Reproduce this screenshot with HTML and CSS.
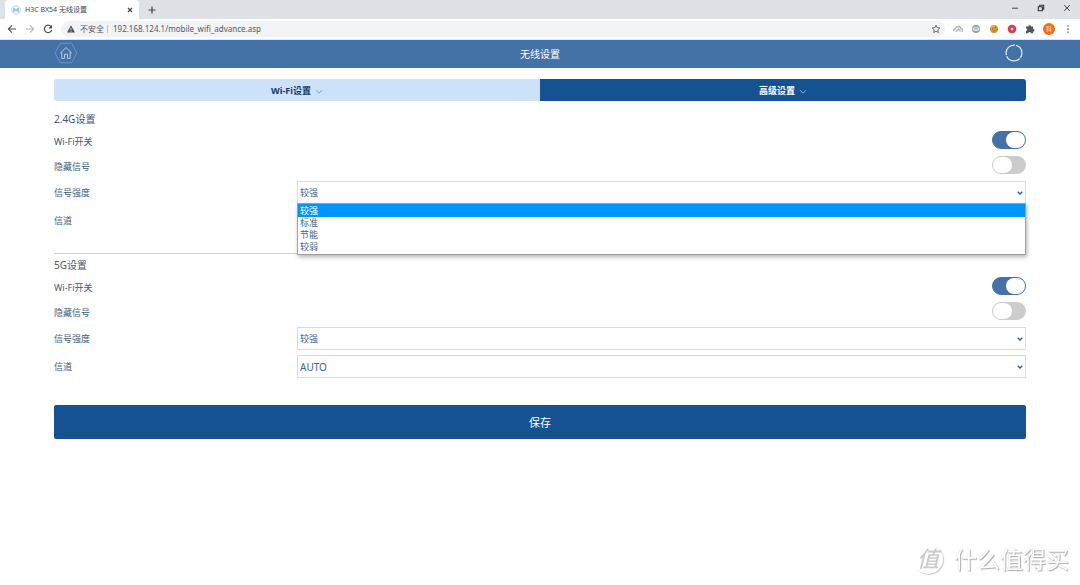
FILE: index.html
```html
<!DOCTYPE html>
<html lang="zh-CN">
<head>
<meta charset="utf-8">
<meta name="viewport" content="width=device-width, initial-scale=1">
<title>H3C BX54 无线设置</title>
<link rel="stylesheet" href="styles.css">
</head>
<body>
<div class="browser">
  <div class="tabstrip">
    <div class="browser-tab">
      <svg class="favicon" viewBox="0 0 10 10"><circle cx="5" cy="5" r="4.2" fill="#edf6fe" stroke="#9bc9ee" stroke-width=".6"/><path d="M2.9 7V3.4L5 5.9l2.1-2.5V7" fill="none" stroke="#3d98df" stroke-width=".8"/></svg>
      <span class="browser-title">H3C BX54 无线设置</span>
      <button class="icon-button" aria-label="关闭标签页"><svg width="6" height="6" viewBox="0 0 6 6"><path d="M1 1l4 4M5 1L1 5" stroke="#444" stroke-width="1.1"/></svg></button>
    </div>
    <button class="icon-button new-tab" aria-label="新标签页"><svg width="8" height="8" viewBox="0 0 8 8"><path d="M4 .5v7M.5 4h7" stroke="#444" stroke-width="1.2"/></svg></button>
    <div class="window-controls">
      <button class="icon-button" aria-label="最小化"><svg width="8" height="8" viewBox="0 0 8 8"><path d="M1 4.2h6" stroke="#444"/></svg></button>
      <button class="icon-button" aria-label="还原"><svg width="8" height="8" viewBox="0 0 8 8"><path d="M1.3 2.7h4v4h-4zM2.7 2.5V1.2h4v4H5.5" fill="none" stroke="#333" stroke-width="1.1"/></svg></button>
      <button class="icon-button" aria-label="关闭"><svg width="8" height="8" viewBox="0 0 8 8"><path d="M1.2 1.2l5.6 5.6M6.8 1.2L1.2 6.8" stroke="#444"/></svg></button>
    </div>
  </div>
  <div class="toolbar">
    <button class="icon-button" aria-label="后退"><svg width="10" height="10" viewBox="0 0 10 10"><path d="M9 5H1.5M5 1.4L1.4 5 5 8.6" fill="none" stroke="#4d5155" stroke-width="1.1"/></svg></button>
    <button class="icon-button" aria-label="前进"><svg width="10" height="10" viewBox="0 0 10 10"><path d="M1 5h7.5M5 1.4L8.6 5 5 8.6" fill="none" stroke="#b5b7ba" stroke-width="1.1"/></svg></button>
    <button class="icon-button" aria-label="重新加载"><svg width="10" height="10" viewBox="0 0 10 10"><path d="M8 2.6A3.7 3.7 0 1 0 8.7 5.8" fill="none" stroke="#4d5155" stroke-width="1.2"/><path d="M9 .8v3.6H5.4z" fill="#4d5155"/></svg></button>
    <div class="omnibox">
      <svg width="8" height="8" viewBox="0 0 8 8"><path d="M4 .3L8 7.6H0z" fill="#505458"/><path d="M4 3v2.2M4 5.8v1" stroke="#f1f3f4" stroke-width=".8"/></svg>
      <span class="insecure">不安全</span>
      <input class="url" type="text" aria-label="地址" value="192.168.124.1/mobile_wifi_advance.asp">
      <button class="icon-button" aria-label="收藏"><svg width="10" height="10" viewBox="0 0 10 10"><path d="M5 1.1l1.1 2.6 2.8.2-2.1 1.9.6 2.8L5 7.1 2.6 8.6l.6-2.8L1.1 3.9l2.8-.2z" fill="none" stroke="#606469" stroke-width=".9"/></svg></button>
    </div>
    <div class="extensions">
      <button class="icon-button" aria-label="网盘"><svg width="10" height="10" viewBox="0 0 10 10"><path d="M1 7.2a1.6 1.6 0 0 1 1.3-2.5A3 3 0 0 1 8 4.5a1.8 1.8 0 0 1 .8 3.2M2.8 7.7L5.5 5l2 2.2" fill="none" stroke="#b0b2b3" stroke-width="1.4"/></svg></button>
      <button class="icon-button" aria-label="同步"><svg width="10" height="10" viewBox="0 0 10 10"><circle cx="5" cy="5" r="4" fill="#8fa1a6"/><ellipse cx="5" cy="5" rx="3.2" ry="1.9" fill="#e5eded"/><path d="M3.2 5.3q1.8-2 3.6 0" fill="none" stroke="#7c969e"/></svg></button>
      <button class="icon-button" aria-label="Cookie"><svg width="10" height="10" viewBox="0 0 10 10"><circle cx="5" cy="5" r="4" fill="#df9232"/><path d="M2 4q1-2.5 3.5-2" stroke="#f8c06a" fill="none"/><path d="M3 5h1M6 3.5h1M5.5 6.8h1M4 7.8h.6M7.5 5.5h.7" stroke="#96501b"/></svg></button>
      <button class="icon-button" aria-label="拦截"><svg width="10" height="10" viewBox="0 0 10 10"><circle cx="5" cy="5" r="4.3" fill="#e03843"/><path d="M5 3.6v2.8M3.6 5h2.8" stroke="#fff" stroke-width="1.1"/></svg></button>
      <button class="icon-button" aria-label="扩展程序"><svg width="10" height="10" viewBox="0 0 10 10"><path d="M1 2.6h2.3a1.4 1.4 0 0 1 2.8 0h2v2.3a1.4 1.4 0 0 1 0 2.8V9.2H5.9a1.3 1.3 0 0 0-2.6 0H1V6.8a1.2 1.2 0 0 0 0-2.4z" fill="#53575b"/></svg></button>
      <button class="avatar">科</button>
      <button class="icon-button" aria-label="菜单"><svg width="10" height="10" viewBox="0 0 10 10"><path d="M4.3 1.2h1.4v1.4H4.3zM4.3 4.3h1.4v1.4H4.3zM4.3 7.4h1.4v1.4H4.3z" fill="#55595d"/></svg></button>
    </div>
  </div>
</div>

<header class="page-header">
  <a class="home" href="#" aria-label="首页"><svg width="24" height="22" viewBox="0 0 24 22"><path d="M6.4 1.2h11.2L23 11l-5.4 9.8H6.4L1 11z" fill="none" stroke="#7198c3" stroke-width=".9"/><path d="M6.2 11.2L12 5.6l5.8 5.6M7.8 10.2v6.2h2.7v-4.2h3v4.2h2.7v-6.2" fill="none" stroke="#b8cbe1" stroke-width="1"/></svg></a>
  <h1 class="page-title">无线设置</h1>
  <button class="refresh" aria-label="刷新"><svg width="18" height="18" viewBox="0 0 18 18"><circle cx="9" cy="9" r="7.9" fill="none" stroke="#dce8f4" stroke-width="1.3" stroke-dasharray="15.4 1.15" stroke-dashoffset="-6"/></svg></button>
</header>

<main class="content">
  <nav class="tabs">
    <button class="tab">Wi-Fi设置<svg class="tab-arrow" viewBox="0 0 8 6"><path d="M1 1.2l3 3 3-3" fill="none" stroke="#6f97c6" stroke-width=".9"/></svg></button>
    <button class="tab tab-active">高级设置<svg class="tab-arrow" viewBox="0 0 8 6"><path d="M1 1.2l3 3 3-3" fill="none" stroke="#9dbce0" stroke-width=".9"/></svg></button>
  </nav>
  <form class="form">
    <section class="band band-divided">
      <h2 class="band-title">2.4G设置</h2>
      <div class="row"><label for="wifi24">Wi-Fi开关</label><input class="switch" type="checkbox" id="wifi24" checked></div>
      <div class="row"><label for="hide24">隐藏信号</label><input class="switch" type="checkbox" id="hide24"></div>
      <div class="row row-select"><label for="power24">信号强度</label>
        <div class="select-box">
          <select class="select" id="power24"><option>较强</option><option>标准</option><option>节能</option><option>较弱</option></select>
          <svg class="select-arrow" viewBox="0 0 6 4"><path d="M.7.8L3 3 5.3.8" fill="none" stroke="#2d62a0" stroke-width="1.4"/></svg>
          <ul class="options" role="listbox" aria-label="信号强度">
            <li class="option option-selected" role="option" aria-selected="true">较强</li>
            <li class="option" role="option">标准</li>
            <li class="option" role="option">节能</li>
            <li class="option" role="option">较弱</li>
          </ul>
        </div>
      </div>
      <div class="row row-select"><label for="channel24">信道</label>
        <div class="select-box">
          <select class="select select-latin" id="channel24"><option>AUTO</option></select>
          <svg class="select-arrow" viewBox="0 0 6 4"><path d="M.7.8L3 3 5.3.8" fill="none" stroke="#2d62a0" stroke-width="1.4"/></svg>
        </div>
      </div>
    </section>
    <section class="band">
      <h2 class="band-title">5G设置</h2>
      <div class="row"><label for="wifi5">Wi-Fi开关</label><input class="switch" type="checkbox" id="wifi5" checked></div>
      <div class="row"><label for="hide5">隐藏信号</label><input class="switch" type="checkbox" id="hide5"></div>
      <div class="row row-select"><label for="power5">信号强度</label>
        <div class="select-box">
          <select class="select" id="power5"><option>较强</option><option>标准</option><option>节能</option><option>较弱</option></select>
          <svg class="select-arrow" viewBox="0 0 6 4"><path d="M.7.8L3 3 5.3.8" fill="none" stroke="#2d62a0" stroke-width="1.4"/></svg>
        </div>
      </div>
      <div class="row row-select"><label for="channel5">信道</label>
        <div class="select-box">
          <select class="select select-latin" id="channel5"><option>AUTO</option></select>
          <svg class="select-arrow" viewBox="0 0 6 4"><path d="M.7.8L3 3 5.3.8" fill="none" stroke="#2d62a0" stroke-width="1.4"/></svg>
        </div>
      </div>
    </section>
    <button class="save" type="button">保存</button>
  </form>
</main>

<div class="watermark"><span class="watermark-logo">值</span><span>什么值得买</span></div>
</body>
</html>
```
FILE: styles.css
```css
* {
  box-sizing: border-box;
}

body {
  margin: 0;
  min-height: 100vh;
  background: #fff;
  color: #3f5878;
  font-family: "Noto Sans", "Noto Sans CJK SC", sans-serif;
  font-size: 9px;
  line-height: 12px;
}

button, input, select {
  margin: 0;
  padding: 0;
  border: 0;
  background: none;
  color: inherit;
  font: inherit;
}

svg {
  display: block;
  flex: none;
}

/* Browser chrome */
.tabstrip {
  display: flex;
  align-items: center;
  height: 19px;
  padding-left: 5px;
  background: #dee1e6;
}

.browser-tab {
  display: flex;
  align-items: center;
  gap: 4px;
  width: 134px;
  height: 19px;
  padding: 0 6px;
  border-radius: 4px 4px 0 0;
  background: #fff;
  color: #45494d;
  font-size: 7px;
}

.favicon {
  width: 10px;
  height: 10px;
}

.browser-title {
  flex: 1;
  white-space: nowrap;
}

.icon-button {
  display: flex;
  flex: none;
}

.new-tab {
  margin-left: 9px;
}

.window-controls {
  display: flex;
  gap: 18px;
  margin-left: auto;
  padding: 0 9px 3px 0;
}

.toolbar {
  display: flex;
  align-items: center;
  gap: 8px;
  height: 21px;
  padding: 0 7px;
  border-bottom: 1px solid #e0e4e9;
}

.omnibox {
  display: flex;
  flex: 1;
  align-items: center;
  gap: 5px;
  height: 16px;
  padding: 0 4px 0 6px;
  border-radius: 8px;
  background: #f1f3f4;
  color: #55595d;
  font-size: 8px;
}

.insecure {
  line-height: 8px;
  padding-right: 3px;
  border-right: 1px solid #bdc1c6;
}

.url {
  flex: 1;
  min-width: 0;
  height: 12px;
}

.extensions {
  display: flex;
  align-items: center;
  gap: 8px;
}

.avatar {
  width: 12px;
  height: 12px;
  border-radius: 50%;
  background: #f46a17;
  color: #fff;
  font-size: 6px;
  line-height: 12px;
}

/* Page header */
.page-header {
  display: grid;
  grid-template-columns: 1fr auto 1fr;
  align-items: center;
  height: 28px;
  padding: 0 5%;
  background: #4472a7;
  color: #fff;
}

.home {
  justify-self: start;
  padding-bottom: 3px;
}

.page-title {
  margin: 0;
  font-size: 10px;
  font-weight: 400;
}

.refresh {
  justify-self: end;
  padding: 0 3px 2px 0;
}

/* Settings */
.content {
  padding: 11px 5% 0;
}

.tabs {
  display: flex;
  margin-bottom: 7px;
  border-radius: 3px;
  overflow: hidden;
}

.tab {
  display: flex;
  flex: 1;
  align-items: center;
  justify-content: center;
  gap: 4px;
  height: 22px;
  padding-top: 1px;
  background: #cce2f9;
  color: #16396a;
  font-weight: 700;
}

.tab-active {
  background: #145291;
  color: #fff;
}

.tab-arrow {
  width: 8px;
  height: 6px;
  margin-top: 2px;
}

.band-divided {
  padding-bottom: 19px;
  border-bottom: 1px solid #c8d4e3;
}

.band-title {
  margin: 0;
  padding-top: 2px;
  font-size: 10px;
  font-weight: 400;
  line-height: 18px;
}

.row {
  display: grid;
  grid-template-columns: 1fr 3fr;
  align-items: center;
  height: 25px;
}

.row label {
  padding-top: 2px;
}

.row-select {
  height: 28px;
}

.switch {
  display: flex;
  justify-self: end;
  appearance: none;
  width: 34px;
  height: 18px;
  margin-bottom: 1px;
  border: 1px solid #ccc;
  border-radius: 9px;
  background: #ccc;
}

.switch::before {
  content: "";
  width: 19px;
  height: 16px;
  border-radius: 8px;
  background: #fff;
}

.switch:checked {
  justify-content: flex-end;
  border-color: #4472a7;
  background: #4472a7;
}

.select-box {
  position: relative;
}

.select {
  display: block;
  appearance: none;
  width: 100%;
  height: 23px;
  padding: 1px 2px 0;
  border: 1px solid #d9dbde;
  background: #fff;
  color: #35659c;
}

.select-latin {
  font-size: 10px;
}

.select-arrow {
  position: absolute;
  top: 10px;
  right: 3px;
  width: 6px;
  height: 4px;
  pointer-events: none;
}

.options {
  position: absolute;
  z-index: 1;
  top: 22px;
  left: 0;
  right: 0;
  margin: 0;
  padding: 0 0 1px;
  border: 1px solid #a0a0a0;
  background: #fff;
  box-shadow: 1px 2px 4px rgba(0, 0, 0, .3);
  color: #35659c;
  list-style: none;
}

.option {
  padding-left: 2px;
}

.option-selected {
  padding-top: 1px;
  background: #0094ff;
  color: #fff;
}

.save {
  width: 100%;
  height: 34px;
  margin-top: 25px;
  padding-top: 1px;
  border-radius: 2px;
  background: #145291;
  color: #fff;
  font-size: 11px;
}

.watermark {
  position: fixed;
  right: 11px;
  bottom: 11px;
  display: flex;
  align-items: center;
  gap: 10px;
  color: #fff;
  font-size: 23px;
  line-height: 30px;
  text-shadow: 1px 1px 1px #aaa, 0 0 1px #bbb;
}

.watermark-logo {
  width: 30px;
  height: 30px;
  margin-right: 1px;
  border-radius: 50%;
  box-shadow: 1px 1px 1px #ccc;
  color: #ccc;
  font-size: 22px;
  font-style: italic;
  font-weight: 500;
  line-height: 28px;
  text-align: center;
  text-shadow: none;
}
```
